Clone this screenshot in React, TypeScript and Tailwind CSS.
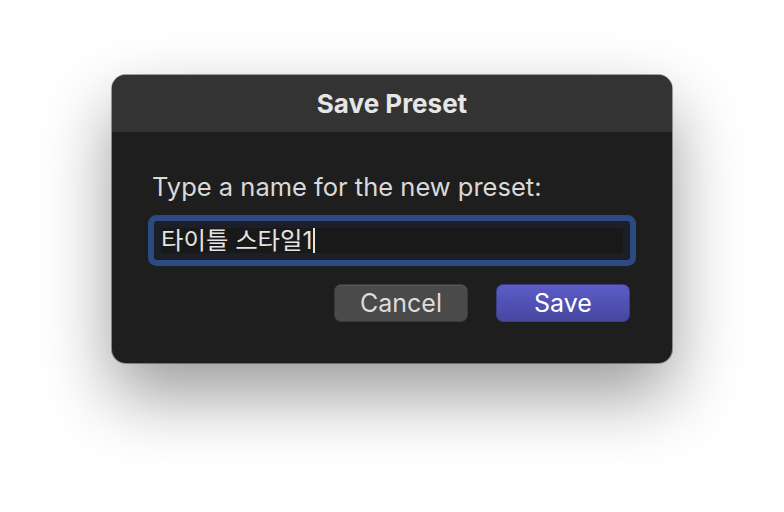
export default function App() {
  return (
    <div className="h-[512px] w-[784px] overflow-hidden bg-white pl-[112px] pt-[75px] font-['Inter','Noto_Sans_CJK_KR',sans-serif]">
      <div className="flex h-[288px] w-[560px] flex-col overflow-hidden rounded-[14px] bg-[#1e1e1e] shadow-[0_0_0_1px_rgba(0,0,0,0.35),0_32px_70px_rgba(0,0,0,0.4)]">
        {/* title bar */}
        <div className="flex h-[57px] shrink-0 items-center justify-center bg-[#333333]">
          <span className="text-[26px] font-bold leading-none text-[#e6e6e6]">Save Preset</span>
        </div>

        <div className="flex flex-col px-[42px] pt-[40px]">
          <p className="-ml-[2px] h-[30px] text-[25.5px] leading-[30px] text-[#d9d9d9]">
            Type a name for the new preset:
          </p>

          {/* focused text field */}
          <div className="mt-[19px] h-[39px] rounded-[3px] bg-[#1c1f28] p-[7px] shadow-[0_0_0_6px_#2b4a84]">
            <div className="flex h-full items-center bg-[#191919]">
              <span className="text-[24.4px] leading-none text-[#e4e4e4]">타이틀 스타일1</span>
              <span className="ml-[1px] h-[25px] w-[2px] bg-[#e4e4e4]" />
            </div>
          </div>

          <div className="mt-[24px] flex justify-end gap-[28px]">
            <button
              type="button"
              className="h-[38px] w-[134px] rounded-[7px] border border-[#3a3a3a] bg-[#4a4a4a] text-[25px] leading-none text-[#dcdcdc] shadow-[inset_0_1px_0_rgba(255,255,255,0.08)]"
            >
              Cancel
            </button>
            <button
              type="button"
              className="h-[38px] w-[134px] rounded-[7px] border border-[#3c3c86] bg-gradient-to-b from-[#5c5cc8] to-[#4747a0] text-[25px] leading-none text-white"
            >
              Save
            </button>
          </div>
        </div>
      </div>
    </div>
  );
}
